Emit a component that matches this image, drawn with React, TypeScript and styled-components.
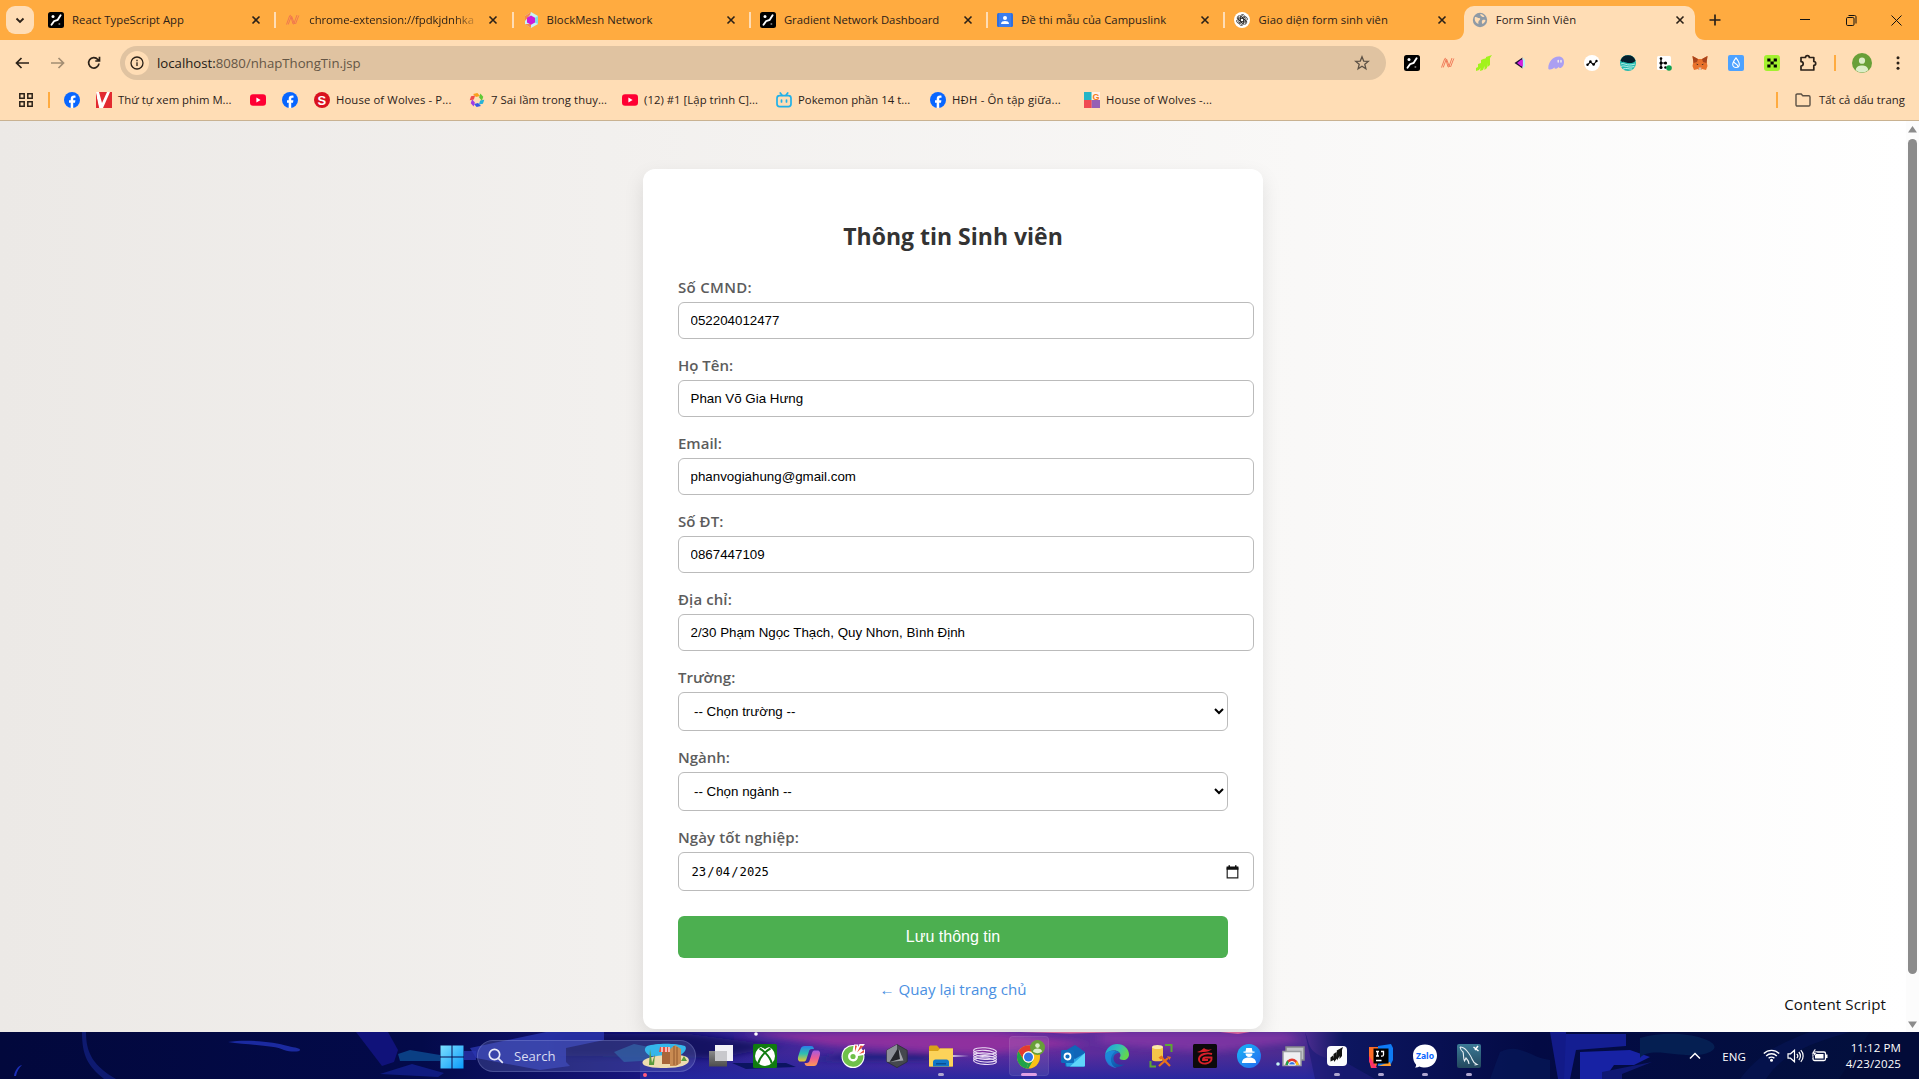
import React from "react";
import styled, { createGlobalStyle, css } from "styled-components";

const ui = `"Open Sans", "Noto Sans", sans-serif`;
const arial = `"Liberation Sans", Arial, sans-serif`;

const Global = createGlobalStyle`
  *, *::before, *::after { box-sizing: border-box; }
  html, body { margin: 0; padding: 0; overflow: hidden; }
  body { font-family: ${ui}; color: #222; }
`;

const Screen = styled.div`
  display: flex;
  flex-direction: column;
  width: 1919px;
  height: 1079px;
  overflow: hidden;
  background: #fff;
`;

/* ---------- tab strip ---------- */
const TabStrip = styled.header`
  display: flex;
  align-items: stretch;
  height: 40px;
  background: #ffab40;
`;
const TabSearchWrap = styled.div`
  width: 38px;
  padding: 6px 0 0 6px;
`;
const TabSearch = styled.div`
  display: flex;
  align-items: center;
  justify-content: center;
  width: 28px;
  height: 28px;
  border-radius: 9px;
  background: #ffddb5;
`;
const TabBox = styled.div<{ $active?: boolean; $line?: boolean }>`
  position: relative;
  display: flex;
  align-items: center;
  width: 237.3px;
  height: 40px;
  padding: 0 0 0 10px;
  ${(p) =>
    p.$line &&
    css`
      &::after {
        content: "";
        position: absolute;
        right: -1px;
        top: 12px;
        width: 2px;
        height: 16px;
        background: #ffddb5;
      }
    `}
  ${(p) =>
    p.$active &&
    css`
      &::before {
        content: "";
        position: absolute;
        inset: 6px 4px 0 2.5px;
        border-radius: 10px 10px 0 0;
        background: #ffddb5;
      }
    `}
`;
const Foot = styled.svg<{ $right?: boolean }>`
  position: absolute;
  bottom: 0;
  ${(p) => (p.$right ? "right: -6px;" : "left: -7.5px;")}
`;
const TabIcon = styled.span`
  position: relative;
  display: flex;
  width: 16px;
  height: 16px;
  margin: 0 8px 0 0;
`;
const TabTitle = styled.span<{ $ls: number; $fade?: boolean }>`
  position: relative;
  width: 168px;
  overflow: hidden;
  white-space: nowrap;
  font-size: 11.3px;
  line-height: 18px;
  color: #2b2118;
  letter-spacing: ${(p) => p.$ls}px;
  ${(p) =>
    p.$fade &&
    css`
      mask-image: linear-gradient(to right, #000 145px, rgba(0, 0, 0, 0.15) 168px);
    `}
`;
const Close = styled.svg`
  position: relative;
  margin: -1px 0 0 11px;
`;
const NewTab = styled.div`
  display: flex;
  align-items: center;
  justify-content: center;
  width: 32px;
`;
const WinControls = styled.div`
  display: flex;
  margin: 0 1px 0 auto;
`;
const WinButton = styled.div`
  display: flex;
  align-items: center;
  justify-content: center;
  width: 46px;
  height: 40px;
  &:last-child { width: 44px; }
`;

/* ---------- toolbar ---------- */
const Toolbar = styled.div`
  display: flex;
  align-items: center;
  height: 46px;
  padding-left: 4px;
  background: #ffddb5;
`;
const NavButton = styled.div`
  display: flex;
  align-items: center;
  justify-content: center;
  width: 36px;
  height: 34px;
`;
const Omnibox = styled.div`
  display: flex;
  align-items: center;
  width: 1266px;
  height: 34px;
  margin-left: 8px;
  padding: 0 16px 0 5px;
  border-radius: 17px;
  background: #e0c3a1;
`;
const SiteInfo = styled.span`
  display: flex;
  align-items: center;
  justify-content: center;
  width: 24px;
  height: 24px;
  border-radius: 50%;
  background: #ffddb5;
`;
const Url = styled.span`
  margin: 0 auto 0 8px;
  font-size: 13.2px;
  color: #655645;
  white-space: nowrap;
  b { font-weight: 400; color: #1f1a14; }
`;
const Extensions = styled.div`
  display: flex;
  margin-left: 8px;
`;
const ExtButton = styled.div`
  display: flex;
  align-items: center;
  justify-content: center;
  width: 36px;
  height: 34px;
`;
const Divider = styled.i<{ $m: string }>`
  width: 2px;
  height: 16px;
  margin: ${(p) => p.$m};
  background: #ffab40;
`;

/* ---------- bookmarks ---------- */
const Bookmarks = styled.div`
  display: flex;
  align-items: center;
  height: 35px;
  padding: 0 14px 6px 19px;
  border-bottom: 1px solid #c9b291;
  background: #ffddb5;
`;
const Bookmark = styled.div<{ $w: number; $ls?: number }>`
  display: flex;
  align-items: center;
  width: ${(p) => p.$w}px;
  gap: 6px;
  font-size: 11.3px;
  line-height: 16px;
  color: #2b2118;
  white-space: nowrap;
  letter-spacing: ${(p) => p.$ls ?? 0}px;
  svg { flex: none; }
`;
const AllBookmarks = styled(Bookmark)`
  gap: 8px;
`;

/* ---------- page ---------- */
const Page = styled.main`
  display: flex;
  height: 911px;
  overflow: hidden;
  background: #fff;
`;
const PageBody = styled.div`
  position: relative;
  display: flex;
  justify-content: center;
  width: 1906px;
  padding-top: 48px;
  background: linear-gradient(to right, #ece9e6, #ffffff);
`;
const Card = styled.section`
  width: 620px;
  height: 860px;
  padding: 51px 35px 0;
  border-radius: 12px;
  background: #fff;
  box-shadow: 0 8px 20px rgba(0, 0, 0, 0.1);
`;
const Heading = styled.h2`
  margin: 0 0 24px;
  font-size: 23px;
  line-height: 32px;
  font-weight: 700;
  text-align: center;
  color: #333;
`;
const Field = styled.div`
  display: flex;
  flex-direction: column;
  gap: 4px;
  margin-bottom: 15px;
`;
const FieldLabel = styled.label<{ $ls?: number }>`
  align-self: flex-start;
  font-size: 15px;
  line-height: 22px;
  font-weight: 600;
  color: #5c5c5c;
  letter-spacing: ${(p) => p.$ls ?? 0}px;
`;
const box = css`
  border: 1px solid #bbb;
  border-radius: 6px;
  background: #fff;
  color: #000;
  font: 13.333px ${arial};
`;
const TextInput = styled.input`
  ${box}
  width: 576px;
  height: 37px;
  padding: 0 11px 0 11.5px;
  outline: none;
`;
const SelectBox = styled.select`
  ${box}
  width: 550px;
  height: 39px;
  padding: 0 11px;
  outline: none;
`;
const DateBox = styled.div`
  ${box}
  display: flex;
  align-items: center;
  justify-content: space-between;
  width: 576px;
  height: 39px;
  padding: 0 14px 0 12.5px;
  font: 12.2px "DejaVu Sans Mono", monospace;
  i { font-style: normal; margin: 0 1px; }
`;
const Submit = styled.button`
  display: block;
  width: 550px;
  height: 42px;
  margin-top: 25px;
  border: 0;
  border-radius: 6px;
  background: #4caf50;
  color: #fff;
  font: 16px ${arial};
`;
const BackLink = styled.a`
  display: block;
  margin-top: 20px;
  font-size: 15.1px;
  line-height: 22px;
  text-align: center;
  color: #4a90e2;
  text-decoration: none;
`;
const ContentScript = styled.div`
  position: absolute;
  right: 20px;
  bottom: 17px;
  font-size: 15.1px;
  line-height: 22px;
  color: #111;
  letter-spacing: 0.1px;
`;
const Scrollbar = styled.div`
  display: flex;
  flex-direction: column;
  align-items: center;
  justify-content: space-between;
  width: 13px;
  padding: 5px 0 4px;
  background: #fcfcfc;
`;
const Thumb = styled.div`
  width: 9px;
  height: 835px;
  margin-bottom: 42px;
  border-radius: 5px;
  background: #8b8b8b;
`;

/* ---------- taskbar ---------- */
const Taskbar = styled.footer`
  position: relative;
  display: flex;
  align-items: stretch;
  height: 47px;
  padding: 0 18px 0 440px;
  background: #02083c;
`;
const Wallpaper = styled.svg`
  position: absolute;
  inset: 0;
`;
const Start = styled.div`
  position: relative;
  display: flex;
  align-items: center;
  padding-top: 2px;
`;
const SearchPill = styled.div`
  position: relative;
  display: flex;
  align-items: center;
  width: 219px;
  height: 32px;
  margin: 8px 3px 0 13px;
  padding: 0 5px 0 10px;
  border-radius: 16px;
  border: 1px solid rgba(190, 200, 255, 0.22);
  background: rgba(120, 130, 200, 0.26);
  font-size: 13.1px;
  line-height: 18px;
  color: #d9dcf2;
  span { margin: -1px auto 0 10px; }
`;
const AppCell = styled.div<{ $active?: boolean; $dot?: boolean }>`
  position: relative;
  display: flex;
  align-items: center;
  justify-content: center;
  width: 40px;
  height: 40px;
  margin: 4px 2px;
  border-radius: 4px;
  ${(p) => p.$active && "background: rgba(255,255,255,.09); box-shadow: inset 0 0 0 1px rgba(255,255,255,.07);"}
  &::after {
    content: "";
    position: absolute;
    bottom: 0;
    height: 3px;
    border-radius: 2px;
    width: ${(p) => (p.$active ? 16 : p.$dot ? 6 : 0)}px;
    background: ${(p) => (p.$active ? "#dfa0e4" : "#aea6cf")};
  }
`;
const Tray = styled.div`
  position: relative;
  display: flex;
  align-items: center;
  margin-left: auto;
  color: #fff;
`;
const Lang = styled.span`
  margin: 1px 17px 0 21px;
  font-size: 11.5px;
  letter-spacing: 0.1px;
`;
const TrayIcons = styled.div`
  display: flex;
  align-items: center;
  gap: 7px;
  margin-right: 16px;
`;
const Clock = styled.div`
  width: 57px;
  text-align: right;
  font-size: 11.5px;
  line-height: 16px;
  white-space: nowrap;
  letter-spacing: 0.1px;
`;

/* ---------- browser icons ---------- */
const Gradient = () => (
  <svg width="16" height="16" viewBox="0 0 16 16">
    <rect width="16" height="16" rx="2.5" fill="#000" />
    <path d="M12.6 3.2 9.6 8 6 9.2 3.5 12.8" stroke="#fff" strokeWidth="1.9" fill="none" strokeLinecap="round" />
    <circle cx="5" cy="4.4" r="1.5" fill="#fff" />
    <circle cx="11.4" cy="12" r="1" fill="#777" />
  </svg>
);
const Nodes = () => (
  <svg width="16" height="16" viewBox="0 0 16 16" fill="none" stroke="#ee7250" strokeWidth=".9">
    <path d="M1.5 12.5 4.6 4c.4-1 1-.9 1.2 0l2 7.400c.3 1 .9 1 1.200 0L12 3M3.200 12.500 6 5M10.500 12 13.800 3.500M6.500 4l3 8" />
  </svg>
);
const Block = () => (
  <svg width="16" height="16" viewBox="0 0 16 16">
    <path d="M8 0 15 4v8l-7 4-6-4V4z" fill="#c9f2f4" />
    <path d="M8 0 2 4v5l5-6zM2 12l6 4v-4z" fill="#f58a4b" />
    <path d="M8 3.500 12 5.800v4.600L8 12.800 4 10.400V5.800z" fill="#cc1bd8" />
    <path d="m12 5.800 3-1.800v8l-3-1.600z" fill="#7fdfe8" />
  </svg>
);
const Contact = () => (
  <svg width="16" height="16" viewBox="0 0 16 16">
    <rect y="1" width="16" height="14" rx="1.500" fill="#2f6fdf" />
    <path d="M2 1h12v14H2z" fill="#3b7ded" />
    <circle cx="8" cy="6" r="2" fill="#fff" />
    <path d="M4 12c0-2.400 2-3 4-3s4 .6 4 3z" fill="#fff" />
  </svg>
);
const OpenAi = () => (
  <svg width="16" height="16" viewBox="0 0 16 16" fill="none" stroke="#222" strokeWidth=".8">
    <circle cx="8" cy="8" r="8" fill="#fff" stroke="none" />
    {[0, 60, 120, 180, 240, 300].map((a) => (
      <path key={a} transform={`rotate(${a} 8 8)`} d="M6.200 9V5a2.400 2.400 0 0 1 4.400-1.300M6.200 6.900 9.500 5l2.600 1.500" />
    ))}
  </svg>
);
const Globe = () => (
  <svg width="16" height="16" viewBox="0 0 16 16">
    <circle cx="8" cy="8" r="7.200" fill="#8f9aa5" />
    <path d="M3 5c2-.5 2.500 1 4 1s1.500 1.500.5 2.200S6 10 6.500 12c-2.500-.8-4.500-3.500-3.500-7zM8.500 2c1.500.3 3 1 4 2.500-1 .8-2.500.8-3-.2S7.700 3 8.500 2zM10.500 8c1.500-.5 3-.2 3 .5s-1.500 3-3 3.500c-.8-1.200-1-3 0-4z" fill="#ffddb5" />
  </svg>
);
const CloseX = () => (
  <Close width="10" height="10" viewBox="0 0 10 10" stroke="#2b2118" strokeWidth="1.600">
    <path d="m1.500 1.500 7 7m0-7-7 7" />
  </Close>
);
const Facebook = () => (
  <svg width="16" height="16" viewBox="0 0 16 16">
    <circle cx="8" cy="8" r="8" fill="#0866ff" />
    <path d="M6.700 16v-5.300H5V8.300h1.700V7.100c0-2.500 1.200-3.600 3.500-3.600.5 0 1 .1 1.300.2v2.100h-.9c-1 0-1.400.4-1.400 1.400v1.100h2.200l-.4 2.400H9.200V16z" fill="#fff" />
  </svg>
);
const YouTube = () => (
  <svg width="16" height="16" viewBox="0 0 16 16">
    <rect y="2.300" width="16" height="11.400" rx="3" fill="#ff0033" />
    <path d="m6.400 5.600 4.200 2.400-4.200 2.400z" fill="#fff" />
  </svg>
);
const VLogo = () => (
  <svg width="16" height="16" viewBox="0 0 16 16">
    <path d="M0 0h16v16H0z" fill="#e22a30" />
    <path d="M0 0h3l3 11L11 0h3L7 16H2.500z" fill="#fff" />
    <path d="M0 2v14h3.200z" fill="#e22a30" />
  </svg>
);
const SLogo = () => (
  <svg width="16" height="16" viewBox="0 0 16 16">
    <circle cx="8" cy="8" r="8" fill="#d9121f" />
    <text x="8" y="12.600" textAnchor="middle" fontFamily="Liberation Sans" fontWeight="700" fontSize="13" fill="#fff">S</text>
  </svg>
);
const Flower = () => (
  <svg width="16" height="16" viewBox="0 0 16 16">
    {["#f9a01b", "#5fc935", "#25b3d8", "#3458e8", "#a03be6", "#f04a4a"].map((c, i) => (
      <path key={c} d="M5.400 1.200h4.400l2 3.600H7.600z" fill={c} transform={`rotate(${i * 60 - 12} 8 8)`} />
    ))}
  </svg>
);
const Bili = () => (
  <svg width="16" height="16" viewBox="0 0 16 16" fill="none" stroke="#20b0e8" strokeWidth="1.700" strokeLinecap="round">
    <rect x="1" y="3.700" width="14" height="11" rx="2.600" />
    <path d="M4.300 1 6 3.300M11.700 1 10 3.300M5.500 8v2M10.500 8v2" />
  </svg>
);
const GGrid = () => (
  <svg width="16" height="16" viewBox="0 0 16 16">
    <path d="M0 0h7.700v8H0z" fill="#25b5c7" />
    <path d="M7.700 0H16v8H7.700z" fill="#fff1e8" />
    <path d="M0 8h7.700v8H0z" fill="#f04a52" />
    <path d="M7.700 8H16v8H7.700z" fill="#9560b5" />
    <text x="12" y="7.500" textAnchor="middle" fontFamily="Liberation Sans" fontWeight="700" fontSize="9" fill="#f47b20">G</text>
  </svg>
);
const extArt: Record<string, React.ReactNode> = {
  bars: <path d="M0 16v-3l2-1V9l3-1V5l3.500-1.500V4L10 3V2l6-2-2 3v7l-2.500 2V8L11 13l-2.500 2V11L7 15l-3 1 .5-3L3 15z" fill="#a2f21c" />,
  block: (
    <>
      <path d="m2.500 8 8-5.500v11z" fill="#1b1030" />
      <path d="m10.500 2.500 2.500 2v7l-2.500 2z" fill="#b9eef2" />
      <path d="M5 8 9 4.800h1.800v6.400H9z" fill="#d51ee0" />
    </>
  ),
  phantom: (
    <>
      <path d="M.3 13C.3 7 5 1.500 10.500 1.500c4 0 5.500 2.500 5.500 5.500 0 3.500-2 6-4 6-1.200 0-1.300-.8-1.300-1.200-1 1.400-2.200 2-3.200 2-1 0-1.200-.8-1-1.500-1.200 1.500-3.200 2.200-4.500 2.200-1.200 0-1.700-.5-1.700-1.500z" fill="#ab9ff2" />
      <path d="M10.200 5.500v1.500M13 5.500v1.500" stroke="#fff5e6" strokeWidth="1.300" strokeLinecap="round" />
    </>
  ),
  nodepay: (
    <>
      <circle cx="8" cy="8" r="8" fill="#fff" />
      <path d="M3.500 9.800 6.300 7l3.300 2.500L12.500 6" stroke="#000" strokeWidth="1.100" fill="none" />
      <g fill="#000"><circle cx="3.500" cy="9.800" r="1.200" /><circle cx="6.400" cy="6.600" r="1.300" /><circle cx="9.600" cy="9.500" r="1.300" /><circle cx="12.500" cy="6" r="1.200" /></g>
    </>
  ),
  wave: (
    <>
      <circle cx="8" cy="8" r="8" fill="#25b9ae" />
      <path d="M1 9c3-2 5 3 14 0M.8 11.500c4-2 7 2 13.500 0M3 14c4-1.500 6 .5 9 0" stroke="#c5f6ee" strokeWidth=".9" fill="none" />
      <path d="M.5 5.500a8 8 0 0 1 15 0C14 8.500 9 8.500 6 7.500s-4 0-5.500-2z" fill="#041e2b" />
    </>
  ),
  dots: (
    <>
      <rect x="1" y="1" width="14" height="14" rx="1.500" fill="#fff" />
      <g fill="#000"><circle cx="5" cy="3.500" r="1.300" /><circle cx="5" cy="8" r="1.600" /><circle cx="5" cy="12.500" r="1.600" /><circle cx="9.500" cy="8" r="1.600" /><circle cx="9.500" cy="12.500" r="1.300" /><path d="M4.400 3h1.200v9H4.400zM5 7.500h4v1H5z" /></g>
      <circle cx="13" cy="13" r="2.800" fill="#12a150" />
    </>
  ),
  fox: (
    <>
      <path d="m.5 1 5.500 3h4l5.500-3-.8 6 .8 4-1.500 4-4-1-1 1H7l-1-1-4 1L.5 11l.8-4z" fill="#e8712a" />
      <path d="m.5 1 5.500 3-1 3-3.500 1zM15.500 1 10 4l1 3 3.500 1z" fill="#a8441c" />
      <path d="M4.500 8.500 6.500 10H5zM11.500 8.500 9.500 10H11z" fill="#222" />
      <path d="M6.500 12.500h3L9 15H7z" fill="#d9c3b0" />
    </>
  ),
  drop: (
    <>
      <rect width="16" height="16" rx="2" fill="#4da2ff" />
      <path d="M8 2.800c2 2.600 3.300 4.400 3.300 6.400a3.300 3.300 0 0 1-6.600 0C4.700 7.200 6 5.400 8 2.800zM6 7c.5 2 4 1.600 3.800 4.600" fill="none" stroke="#fff" strokeWidth="1.100" />
    </>
  ),
  okx: (
    <>
      <rect width="16" height="16" rx="3" fill="#a3f02f" />
      <path d="M3.300 3.500h3.200v3H3.300zM9.700 3.500h3.200v3H9.700zM6.500 6.500h3.200v3H6.500zM3.300 9.500h3.200v3H3.300zM9.700 9.500h3.200v3H9.700z" fill="#000" />
    </>
  ),
};

/* ---------- taskbar icons ---------- */
const appArt: Record<string, React.ReactNode> = {
  taskview: (
    <>
      <defs><linearGradient id="tv" x1="0" y1="0" x2="0" y2="1"><stop offset="0" stopColor="#8a8a8a" /><stop offset="1" stopColor="#4d4d4d" /></linearGradient></defs>
      <path d="M6 1h18v16H6z" fill="#f1f1f5" />
      <path d="M0 7h18v15.500H0z" fill="url(#tv)" />
      <path d="M6 7h12v10H6z" fill="#c8c8cc" />
    </>
  ),
  xbox: (
    <>
      <rect width="24" height="24" rx="1.500" fill="#107c10" />
      <circle cx="12" cy="12" r="10" fill="#fff" />
      <path d="M5.500 2.500C8 2.800 10.300 4 12 5.300c1.700-1.300 4-2.500 6.500-2.800L16 0H8z" fill="#107c10" />
      <path d="M6.500 4.500C8.500 5.500 10.500 7 12 8.600c-3.500 3.400-6 7.200-6.800 10.900M17.500 4.500C15.500 5.500 13.500 7 12 8.600c3.500 3.400 6 7.200 6.800 10.900" fill="none" stroke="#107c10" strokeWidth="2" />
    </>
  ),
  copilot: (
    <>
      <defs>
        <linearGradient id="c1" x1="0" y1="0" x2="0" y2="1"><stop offset="0" stopColor="#2a7fe8" /><stop offset=".5" stopColor="#2fc0b0" /><stop offset="1" stopColor="#f0c52c" /></linearGradient>
        <linearGradient id="c2" x1="0" y1="0" x2="0" y2="1"><stop offset="0" stopColor="#a45be0" /><stop offset=".5" stopColor="#ee5c94" /><stop offset="1" stopColor="#fb9a55" /></linearGradient>
      </defs>
      <path d="M7.500 2H14c2 0 2.500 1 3 3h-2c-2 0-2.700 1-3.200 2.800L9.500 15c-.6 2-1.500 2.500-3 2.500H3.500C1 17.500.5 15 1.200 12.500l2.300-7.300C4.300 3 5.500 2 7.500 2z" fill="url(#c1)" />
      <path d="M17 22h-6.500c-2 0-2.500-1-3-3h2c2 0 2.700-1 3.200-2.800L15 9c.6-2 1.500-2.500 3-2.500h2.500c2.500 0 3 2.500 2.300 5l-2.300 7.300C19.700 21 19 22 17 22z" fill="url(#c2)" />
    </>
  ),
  coccoc: (
    <>
      <circle cx="12" cy="12.500" r="11.500" fill="#fff" />
      <path d="M12.500 2A10.400 10.400 0 1 0 22.300 11l-5.300 1A5 5 0 1 1 11.500 7.500z" fill="#6fc04a" />
      <circle cx="12" cy="12.500" r="2.600" fill="#6fc04a" />
      <path d="M13 .5h4.500l-2.500 7-1.500 1zM18.500 0H24l-8 9-1-.5zM24 5v5l-7 1z" fill="#fff" />
      <path d="m14 1.500 2 .3-2 6zM19.500 1.500l3 .5-6.500 6.500zM23 6v2.500l-5 1.500z" fill="#e8503a" />
    </>
  ),
  cursor: (
    <>
      <path d="m12 .5 10.200 5.800v11.500L12 23.600 1.800 17.800V6.300z" fill="#45484e" stroke="#2b2d32" strokeWidth=".8" />
      <path d="M12 .5v5L5 18l-3.200-.2V6.300z" fill="#8d9198" />
      <path d="m13.500 4 1.500 12-10.500 2z" fill="#24262b" />
      <path d="m13.500 4 5 12.500-14 1.500L15 15z" fill="#b9bcc2" opacity=".8" />
    </>
  ),
  explorer: (
    <>
      <path d="M0 3.500C0 2 .8 1.500 2 1.500h6l2.500 3H24V21c0 1-.5 1.500-1.500 1.500h-21C.5 22.500 0 22 0 21z" fill="#d9a018" />
      <path d="M0 7h9l2-2.500h13V22.500H0z" fill="#fcd35a" />
      <path d="M4 22.500V18c0-1.500 1-2.500 2.500-2.500h11c1.500 0 2.500 1 2.500 2.500v4.500z" fill="#1276c8" />
      <path d="M7 19h10v1.500H7z" fill="#0a4f92" />
    </>
  ),
  stacks: (
    <g fill="none" stroke="#eadcf5" strokeWidth="1.100">
      {[7, 9.6, 12.2, 14.8, 17.200].map((y) => (
        <ellipse key={y} cx="12" cy={y} rx="11.400" ry="3.200" transform={`rotate(4 12 ${y})`} />
      ))}
    </g>
  ),
  chrome: (
    <>
      <circle cx="11.500" cy="13" r="11.500" fill="#fbc116" />
      <path d="M11.500 1.500A11.500 11.500 0 0 1 21.500 7.300H11.500a5.700 5.700 0 0 0-5 8.600L1.500 7.300a11.500 11.500 0 0 1 10-5.800z" fill="#e33b2e" />
      <path d="M1.500 7.300 6.500 15.900a5.700 5.700 0 0 0 5 2.800l-2 5.700A11.500 11.500 0 0 1 1.500 7.300z" fill="#1fa24a" />
      <path d="M11.500 18.700a5.700 5.700 0 0 0 4.900-2.900l-4.900 8.700-2 0z" fill="#1fa24a" />
      <circle cx="11.500" cy="13" r="5.700" fill="#fff" /><circle cx="11.500" cy="13" r="4.500" fill="#2f74e6" />
      <circle cx="20.500" cy="3.500" r="7.500" fill="#689f38" />
      <circle cx="20.500" cy="1.600" r="2.300" fill="#dcedc8" /><path d="M16 7.500c0-2 2-3 4.500-3s4.500 1 4.500 3a7 7 0 0 1-9 0z" fill="#dcedc8" />
    </>
  ),
  outlook: (
    <>
      <path d="m4 7 10-6 10 7v13c0 1-.5 1.500-1.500 1.500h-17C4.500 22.500 4 22 4 21z" fill="#1066b8" />
      <path d="m4 10 10 5 10-6v12c0 1-.5 1.500-1.500 1.500h-17z" fill="#2aa5e6" />
      <path d="m24 9-15 13.500h13.500c1 0 1.500-.5 1.500-1.500z" fill="#5fd6fa" />
      <rect x="0" y="6" width="13" height="13" rx="1.500" fill="#0f6cbd" />
      <circle cx="6.500" cy="12.500" r="3" fill="none" stroke="#fff" strokeWidth="1.800" />
    </>
  ),
  edge: (
    <>
      <defs>
        <linearGradient id="e1" x1="0" y1="0" x2="1" y2=".4"><stop offset="0" stopColor="#1b9de2" /><stop offset=".6" stopColor="#35c1b4" /><stop offset="1" stopColor="#62d84f" /></linearGradient>
        <linearGradient id="e2" x1="0" y1="0" x2="1" y2="1"><stop offset="0" stopColor="#1b86d6" /><stop offset="1" stopColor="#0c4aa0" /></linearGradient>
      </defs>
      <path d="M.2 10.500C1 4.500 6 0 12 0c7 0 12 5 12 10.500 0 3.500-2.600 5.500-5.500 5.500-2.500 0-4-1-4-2 0-.8 1-1 1-2.800 0-2.500-2.500-4.700-6-4.700-4 0-7.500 2-9.300 4z" fill="url(#e1)" />
      <path d="M.2 10.500C2 8 5 6.500 8.500 6.500c3 0 5.200 1.200 6.200 2.700-3-1-6.200 1.500-6.200 5.300 0 4.500 5 8 11.500 5.500A12 12 0 0 1 .2 10.500z" fill="url(#e2)" />
      <path d="M0 12c0 7 5.500 12 12 12-4.500-1.500-6.500-5.500-6-9.500.3-3 2-5.500 4.500-7.300C5 6 0 8.500 0 12z" fill="#1f8fdf" opacity=".7" />
    </>
  ),
  sql: (
    <>
      <path d="M16 1h6.500v7M1.500 17v5.500H7" stroke="#5da832" strokeWidth="2" fill="none" />
      <path d="M3 3v13c0 1.800 11 1.800 11 0V3z" fill="#f4c54a" /><ellipse cx="8.500" cy="3" rx="5.500" ry="2" fill="#fbe7a6" />
      <path d="m10 22 9-8m-7-1 9 9" stroke="#e8721c" strokeWidth="2.200" /><path d="m9.500 13.500 3-2 2 2-3 2zM18 12l4 1-1.500 3z" fill="#e8721c" />
    </>
  ),
  garena: (
    <>
      <rect width="24" height="24" rx="1.500" fill="#0c0a0c" />
      <path d="M4 8c3-1 5-2 7-4 2 2 5 2 8 1-2 2-5 3-8 3S6 9 4 8z" fill="#d8202a" />
      <path d="M19 10c-5-1.500-12 0-13 4.500C5.500 18 9 20 13 19.500c4-.5 6-3 5.500-6h-6c-1.500 0-2.500 1-2.500 2.500h5" fill="none" stroke="#d8202a" strokeWidth="1.900" />
    </>
  ),
  spy: (
    <>
      <defs><linearGradient id="sp" x1="0" y1="0" x2="1" y2="1"><stop offset="0" stopColor="#19b8f5" /><stop offset="1" stopColor="#2467f0" /></linearGradient></defs>
      <circle cx="12" cy="12" r="12" fill="url(#sp)" />
      <path d="M8.500 7.500 9.200 4h5.600l.7 3.500zM6.500 7.500h11v1.200h-11zM8.500 9.500h7c0 2-1.500 3.500-3.500 3.500s-3.500-1.500-3.500-3.500zM5 19c0-4 3-5.500 7-5.500s7 1.500 7 5.500z" fill="#fff" />
    </>
  ),
  remote: (
    <>
      <path d="M5 3h18v13H5z" fill="#bfc2c6" stroke="#85888c" strokeWidth="1.500" />
      <path d="M2 7.500h18v14H2z" fill="#eef0f2" stroke="#9a9da1" strokeWidth="1.500" />
      <path d="M4.500 21a6.500 6.500 0 0 1 13 0z" fill="#e33b2e" /><path d="M4.500 21a6.500 6.500 0 0 1 2-4.700L9 21z" fill="#1fa24a" /><path d="M17.500 21a6.500 6.500 0 0 0-1.500-4L13 21z" fill="#fbc116" />
      <path d="M7.500 21a3.500 3.500 0 0 1 7 0z" fill="#2f74e6" stroke="#fff" />
      <circle cx="-3" cy="20" r="1.800" fill="#c7f5f2" />
    </>
  ),
  shard: (
    <>
      <rect x="2" y="2" width="20" height="20" rx="4" fill="#fbfbfd" />
      <path d="M5.500 17.500v-4l2.500-2 .5 3V10l3-2 .3 5V6.500L18 3l-1 3v6l-2.500 3v-3L12 16.500v-2L9 18v-2z" fill="#111" />
    </>
  ),
  idea: (
    <>
      <path d="M0 3h13l-6 20-5 1-2-8z" fill="#fc6d26" /><path d="M0 12 8 24H3L0 17z" fill="#fe2f6d" />
      <path d="M9 2 22 0l2 4v12l-3 6H9z" fill="#0f7bf5" /><path d="m9 22 12-4 1 4h-8z" fill="#fb9d2f" />
      <rect x="4.500" y="4.500" width="15" height="15" fill="#000" />
      <path d="M7 7.500h3M8.500 7.500v4.500M7 12h3M12 7.500h2.500v3.200c0 1-.6 1.500-1.500 1.500h-1M7 16.500h5.500" stroke="#fff" strokeWidth="1.300" fill="none" />
    </>
  ),
  zalo: (
    <>
      <path d="M12 .5c7 0 12 4.500 12 11s-5 12-12 12c-2.500 0-4-.4-5.500-1-1.500.9-3 1.200-4.500 1 1-1 1.300-2 1-3-2-2-3-5-3-9 0-6.500 5-11 12-11z" fill="#fff" />
      <text x="12" y="14.800" textAnchor="middle" fontFamily="Noto Sans" fontWeight="700" fontSize="8.600" fill="#0b68ff">Zalo</text>
    </>
  ),
  mysql: (
    <>
      <defs><linearGradient id="my" x1="0" y1="0" x2="0" y2="1"><stop offset="0" stopColor="#3b7a96" /><stop offset="1" stopColor="#23485e" /></linearGradient></defs>
      <rect width="24" height="24" rx="2" fill="url(#my)" />
      <path d="M3 3c3 0 5 1.500 7 4s4 5 5 8 3 4.500 5 5.500l-2.500.5M3 3c.5 2.500 1.500 4 3 5 1 3 0 6 1.500 9l1.500-3c2 2 3 5 3 6" fill="none" stroke="#e7eff3" strokeWidth="1.100" />
      <path d="m16.500 3 5 4M21 2l-3 4" stroke="#fff" strokeWidth="1.500" />
    </>
  ),
};
const apps: [string, ("active" | "dot")?][] = [
  ["taskview"], ["xbox"], ["copilot"], ["coccoc"], ["cursor"], ["explorer", "dot"], ["stacks"], ["chrome", "active"],
  ["outlook"], ["edge"], ["sql"], ["garena"], ["spy"], ["remote"], ["shard", "dot"], ["idea", "dot"], ["zalo", "dot"], ["mysql", "dot"],
];

const TaskbarArt = () => (
  <Wallpaper width="1919" height="47" viewBox="0 0 1919 47">
    <defs>
      <linearGradient id="sky" x1="0" x2="1919" y1="0" y2="0" gradientUnits="userSpaceOnUse">
        <stop offset="0" stopColor="#02083c" /><stop offset=".22" stopColor="#030a4a" /><stop offset=".33" stopColor="#17157c" />
        <stop offset=".4" stopColor="#3a2698" /><stop offset=".48" stopColor="#5a2a9e" /><stop offset=".56" stopColor="#5e2c9c" />
        <stop offset=".68" stopColor="#4a2c90" /><stop offset=".7" stopColor="#0d1660" /><stop offset=".8" stopColor="#030a44" /><stop offset="1" stopColor="#02103c" />
      </linearGradient>
      <linearGradient id="low" x1="0" x2="0" y1="0" y2="1"><stop offset=".45" stopColor="#2327a0" stopOpacity="0" /><stop offset="1" stopColor="#2327a0" stopOpacity=".9" /></linearGradient>
      <filter id="soft" x="-20%" y="-80%" width="140%" height="260%"><feGaussianBlur stdDeviation="7 3" /></filter>
    </defs>
    <path d="M0 0h1919v47H0z" fill="url(#sky)" />
    <path d="M640 0h680v47H640z" fill="url(#low)" />
    <g filter="url(#soft)">
      <path d="M740 0h260l90 12-110 10-150-8z" fill="#a0309f" opacity=".75" />
      <path d="M1100 0h190l10 10-90 10-110-8z" fill="#8b38a8" opacity=".7" />
      <path d="M560 2h130l90 12-60 12-160-2z" fill="#0b1058" opacity=".8" />
      <path d="M850 22h90l-10 6h-120z" fill="#131c78" />
    </g>
    <path d="M82 0h4c0 22 8 34 30 47h-12C88 34 82 24 82 0z" fill="#0e1a70" />
    <path d="M14 44c1-6 4-10 8-11-3 3-5 6-6 11z" fill="#1c2fb8" />
    <path d="M228 10c20-3 46 0 60 4 8 2 12 2 12 4s-10 2-16 0c-10-5-36-5-56-8z" fill="#1b2aa0" />
    <path d="M356 0h32l10 18-4 12-12 4z" fill="#10127a" />
    <path d="m380 42 32-10 32 9-6 4z" fill="#0f1b80" />
    <path d="m398 22 12-4 30 5v6l-40 0z" fill="#0a3f84" />
    <path d="M464 19h12v9h-12z" fill="#222a9a" />
    <path d="m470 16 76-16h58v8l-38 8v14l4 4-30 4-64-12z" fill="#2b36b0" opacity=".8" />
    <path d="m614 20 20-8 30 6-6 10-34 2z" fill="#1b5b9c" opacity=".7" />
    <path d="M732 31h54l10 4-50 2z" fill="#0b1460" />
    <circle cx="756" cy="2" r="1.800" fill="#fff" /><circle cx="645" cy="43" r="2" fill="#ff5c7c" /><path d="m945 23 24 1-24 1z" fill="#fff" />
    <path d="M1220 0h30l-12 2zM1020 0h110l-60 1.500z" fill="#f07098" opacity=".8" />
    <path d="M1305 0c6 14 0 24 40 30l30 17h-60z" fill="#1c1b78" opacity=".7" />
    <path d="M1550 0h16v47h-8z" fill="#121a88" /><path d="M1566 2h60v12l-50 4-6 29h-6z" fill="#141e92" />
    <path d="m1580 20 50-2 20 7-16 8-20 0-10 14h-24z" fill="#1722a4" /><path d="m1602 40 50-10-30 12v5h-20z" fill="#0f1874" />
    <path d="M1640 6c40-12 90 4 70 14s-60-8-70 6z" fill="#051f52" /><path d="M1740 47c20-26 40-36 70-47h40c-50 14-70 26-84 47z" fill="#05124c" />
    <path d="M1870 0h49v47h-80z" fill="#020b38" />
    <path d="M1500 20c20-10 30 6 50 8v19h-60z" fill="#071a5c" opacity=".6" />
  </Wallpaper>
);

const tabs: [string, React.ReactNode, number][] = [
  ["React TypeScript App", <Gradient />, 0.05],
  ["chrome-extension://fpdkjdnhka", <Nodes />, -0.06],
  ["BlockMesh Network", <Block />, 0.05],
  ["Gradient Network Dashboard", <Gradient />, 0],
  ["Đề thi mẫu của Campuslink", <Contact />, 0.04],
  ["Giao diện form sinh viên", <OpenAi />, 0.04],
  ["Form Sinh Viên", <Globe />, 0.08],
];
const marks: [React.ReactNode, string, number, number][] = [
  [<Facebook />, "", 32, 0],
  [<VLogo />, "Thứ tự xem phim M...", 154, 0.04],
  [<YouTube />, "", 32, 0],
  [<Facebook />, "", 32, 0],
  [<SLogo />, "House of Wolves - P...", 155, 0.12],
  [<Flower />, "7 Sai lầm trong thuy...", 153, 0.09],
  [<YouTube />, "(12) #1 [Lập trình C]...", 154, 0.05],
  [<Bili />, "Pokemon phần 14 t...", 154, 0.02],
  [<Facebook />, "HĐH - Ôn tập giữa...", 154, 0.21],
  [<GGrid />, "House of Wolves -...", 154, 0.15],
];
const inputs: [string, string, number][] = [
  ["Số CMND:", "052204012477", 0.3],
  ["Họ Tên:", "Phan Võ Gia Hưng", 0],
  ["Email:", "phanvogiahung@gmail.com", 0],
  ["Số ĐT:", "0867447109", 0.1],
  ["Địa chỉ:", "2/30 Phạm Ngọc Thạch, Quy Nhơn, Bình Định", 0.1],
];
const selects: [string, string][] = [
  ["Trường:", "-- Chọn trường --"],
  ["Ngành:", "-- Chọn ngành --"],
];

export default function App() {
  return (
    <Screen>
      <Global />
      <TabStrip>
        <TabSearchWrap>
          <TabSearch>
            <svg width="10" height="10" viewBox="0 0 10 10" fill="none" stroke="#2b2118" strokeWidth="1.800"><path d="m1.500 3.500 3.500 3.500 3.500-3.500" /></svg>
          </TabSearch>
        </TabSearchWrap>
        {tabs.map(([title, icon, ls], i) => (
          <TabBox key={title} $active={i === 6} $line={i < 5}>
            {i === 6 && (
              <>
                <Foot width="10" height="10" viewBox="0 0 10 10"><path d="M10 0v10H0C6 10 10 6 10 0z" fill="#ffddb5" /></Foot>
                <Foot $right width="10" height="10" viewBox="0 0 10 10"><path d="M0 0v10h10C4 10 0 6 0 0z" fill="#ffddb5" /></Foot>
              </>
            )}
            <TabIcon>{icon}</TabIcon>
            <TabTitle $ls={ls} $fade={i === 1}>{title}</TabTitle>
            <CloseX />
          </TabBox>
        ))}
        <NewTab>
          <svg width="12" height="12" viewBox="0 0 12 12" stroke="#2b2118" strokeWidth="1.700"><path d="M6 .5v11M.5 6h11" /></svg>
        </NewTab>
        <WinControls>
          <WinButton><svg width="10" height="10" viewBox="0 0 10 10" stroke="#111"><path d="M0 4.500h10" /></svg></WinButton>
          <WinButton><svg width="11" height="11" viewBox="0 0 11 11" fill="none" stroke="#111"><rect x=".5" y="2.500" width="7.500" height="8" rx="1.200" /><path d="M2.500.5H8.500c1 0 1.500.5 1.500 1.500v6.500" /></svg></WinButton>
          <WinButton><svg width="11" height="11" viewBox="0 0 11 11" stroke="#111"><path d="m.5.5 10 10m0-10-10 10" /></svg></WinButton>
        </WinControls>
      </TabStrip>

      <Toolbar>
        <NavButton><svg width="14" height="12" viewBox="0 0 14 12" fill="none" stroke="#2b2118" strokeWidth="1.700"><path d="M14 6H1.500M6.500 1l-5 5 5 5" /></svg></NavButton>
        <NavButton><svg width="14" height="12" viewBox="0 0 14 12" fill="none" stroke="#a38d72" strokeWidth="1.700"><path d="M0 6h12.500M7.500 1l5 5-5 5" /></svg></NavButton>
        <NavButton><svg width="14" height="14" viewBox="0 0 14 14" fill="none" stroke="#2b2118" strokeWidth="1.700"><path d="M12 7.500A5.200 5.200 0 1 1 10.800 3.500L12.500 5M12.500.8V5H8.300" /></svg></NavButton>
        <Omnibox>
          <SiteInfo><svg width="14" height="14" viewBox="0 0 14 14" fill="none" stroke="#2b2118" strokeWidth="1.300"><circle cx="7" cy="7" r="6" /><path d="M7 6.200V10M7 3.800v1.400" /></svg></SiteInfo>
          <Url><b>localhost:</b>8080/nhapThongTin.jsp</Url>
          <svg width="16" height="16" viewBox="0 0 16 16" fill="none" stroke="#5c5145" strokeWidth="1.300"><path d="m8 1.800 1.700 4.300 4.600.3-3.500 2.900 1.100 4.500L8 11.300l-3.900 2.500 1.100-4.500-3.500-2.900 4.600-.3z" /></svg>
        </Omnibox>
        <Extensions>
          <ExtButton><Gradient /></ExtButton>
          <ExtButton><Nodes /></ExtButton>
          {Object.keys(extArt).map((n) => (
            <ExtButton key={n}><svg width="16" height="16" viewBox="0 0 16 16">{extArt[n]}</svg></ExtButton>
          ))}
          <ExtButton>
            <svg width="18" height="18" viewBox="0 0 18 18" fill="none" stroke="#2b2118" strokeWidth="1.700" strokeLinejoin="round"><path d="M2 3.500h4.500a1.900 1.900 0 0 1 3.800 0h4.500v4a1.900 1.900 0 0 1 0 3.800v4.700H2v-4a2.200 2.200 0 0 0 0-4.400z" /></svg>
          </ExtButton>
        </Extensions>
        <Divider $m="0 8px" />
        <ExtButton>
          <svg width="20" height="20" viewBox="0 0 20 20"><circle cx="10" cy="10" r="10" fill="#689f38" /><circle cx="10" cy="7.700" r="3.100" fill="#dcedc8" /><path d="M3.800 17.200C3.800 14 7 12.600 10 12.600s6.200 1.400 6.200 4.600a9.900 9.900 0 0 1-12.400 0z" fill="#dcedc8" /></svg>
        </ExtButton>
        <ExtButton><svg width="4" height="16" viewBox="0 0 4 16" fill="#2b2118"><circle cx="2" cy="2.800" r="1.500" /><circle cx="2" cy="8" r="1.500" /><circle cx="2" cy="13.200" r="1.500" /></svg></ExtButton>
      </Toolbar>

      <Bookmarks>
        <svg width="14" height="14" viewBox="0 0 14 14" fill="none" stroke="#2b2118" strokeWidth="1.500"><path d="M.8.8h4.400v4.400H.8zM8.800.8h4.400v4.400H8.800zM.8 8.800h4.400v4.400H.8zM8.800 8.800h4.400v4.400H8.800z" /></svg>
        <Divider $m="0 14px 0 15px" />
        {marks.map(([icon, text, w, ls], i) => <Bookmark key={i} $w={w} $ls={ls}>{icon}{text}</Bookmark>)}
        <Divider $m="0 17px 0 auto" />
        <AllBookmarks $w={110} $ls={0.05}>
          <svg width="16" height="14" viewBox="0 0 16 14" fill="none" stroke="#5c5145" strokeWidth="1.400"><path d="M1 2.200C1 1.500 1.500 1 2.200 1h4l1.600 1.800h6c.7 0 1.200.5 1.200 1.200v7.800c0 .7-.5 1.200-1.200 1.200H2.200C1.500 13 1 12.500 1 11.800z" /></svg>
          Tất cả dấu trang
        </AllBookmarks>
      </Bookmarks>

      <Page>
        <PageBody>
          <Card>
            <Heading>Thông tin Sinh viên</Heading>
            {inputs.map(([label, value, ls]) => (
              <Field key={label}><FieldLabel $ls={ls}>{label}</FieldLabel><TextInput defaultValue={value} /></Field>
            ))}
            {selects.map(([label, value]) => (
              <Field key={label}><FieldLabel>{label}</FieldLabel><SelectBox><option>{value}</option></SelectBox></Field>
            ))}
            <Field>
              <FieldLabel $ls={0.1}>Ngày tốt nghiệp:</FieldLabel>
              <DateBox>
                <span>23<i>/</i>04<i>/</i>2025</span>
                <svg width="13" height="14" viewBox="0 0 13 14"><path d="M1.200 3h10.600v9.800H1.200z" fill="none" stroke="#222" strokeWidth="1.200" /><path d="M.6 1.500h11.800v3.300H.6zM2.500.3h1.500v2H2.500zM9 .3h1.500v2H9z" fill="#111" /></svg>
              </DateBox>
            </Field>
            <Submit>Lưu thông tin</Submit>
            <BackLink>← Quay lại trang chủ</BackLink>
          </Card>
          <ContentScript>Content Script</ContentScript>
        </PageBody>
        <Scrollbar>
          <svg width="9" height="7" viewBox="0 0 9 7"><path d="M4.500 0 9 6.500H0z" fill="#8b8b8b" /></svg>
          <Thumb />
          <svg width="9" height="7" viewBox="0 0 9 7"><path d="M0 .5h9L4.500 7z" fill="#8b8b8b" /></svg>
        </Scrollbar>
      </Page>

      <Taskbar>
        <TaskbarArt />
        <Start>
          <svg width="24" height="24" viewBox="0 0 24 24"><defs><linearGradient id="w" x1="0" y1="0" x2="1" y2="1"><stop offset="0" stopColor="#7de0ff" /><stop offset="1" stopColor="#0a9bfa" /></linearGradient></defs><path d="M.5.500h11v11H.5zM12.500.500h11v11h-11zM.5 12.500h11v11H.5zM12.500 12.500h11v11h-11z" fill="url(#w)" /></svg>
        </Start>
        <SearchPill>
          <svg width="16" height="16" viewBox="0 0 16 16" fill="none" stroke="#e8eaf8" strokeWidth="1.700"><circle cx="6.500" cy="6.500" r="5.200" /><path d="m10.300 10.300 4.500 4.500" /></svg>
          <span>Search</span>
          <svg width="48" height="26" viewBox="0 0 48 26">
            <path d="M5 3C14 0 34 0 43 3c3 3-2 8-6 10H8C3 10 1 6 5 3z" fill="#35b6ea" />
            <path d="M1 18c4-6 40-9 45-3 4 6-6 10-22 10S-2 23 1 18z" fill="#eedcb0" />
            <path d="M20 8h9v13h-9z" fill="#a8663a" /><path d="m28 6 5-4 6 4v14l-5 3h-6z" fill="#c98b52" /><path d="M32 3v19M35 4v18" stroke="#93582c" />
            <path d="M18 4h10v5H17z" fill="#e6503e" /><path d="M20 4v5M24 4v5M27 4v5" stroke="#fff" strokeWidth="1.200" />
            <path d="m7 22 1-16 2 14 3-9-1 11zM39 18l3-5 3 5z" fill="#5a9a3c" />
          </svg>
        </SearchPill>
        {apps.map(([name, state]) => (
          <AppCell key={name} $active={state === "active"} $dot={state === "dot"}>
            <svg width="24" height="24" viewBox="0 0 24 24" overflow="visible">{appArt[name]}</svg>
          </AppCell>
        ))}
        <Tray>
          <svg width="12" height="8" viewBox="0 0 12 8" fill="none" stroke="#fff" strokeWidth="1.500"><path d="m1 6.500 5-5 5 5" /></svg>
          <Lang>ENG</Lang>
          <TrayIcons>
            <svg width="17" height="13" viewBox="0 0 17 13" fill="none" stroke="#fff" strokeWidth="1.400"><path d="M.8 4.500a11 11 0 0 1 15.400 0M3.200 7a7.500 7.500 0 0 1 10.600 0M5.600 9.300a4.200 4.200 0 0 1 5.800 0" /><circle cx="8.500" cy="11.300" r="1.500" fill="#fff" stroke="none" /></svg>
            <svg width="17" height="14" viewBox="0 0 17 14" fill="none" stroke="#fff" strokeWidth="1.200"><path d="M1 4.800h2.500L7.500 1.200v11.600L3.500 9.200H1zM9.800 4.800a3.200 3.200 0 0 1 0 4.400M11.800 3a5.800 5.800 0 0 1 0 8M13.800 1.200a8.400 8.400 0 0 1 0 11.600" /></svg>
            <svg width="17" height="13" viewBox="0 0 17 13"><rect x="2" y="3" width="12.500" height="8.500" rx="1.500" fill="none" stroke="#fff" strokeWidth="1.300" /><path d="M4 5h8.500v4.500H4zM15 5.500h1.500v3.500H15z" fill="#fff" /><path d="M3.500 0 .5 5h2.200L1.800 8.500 6 3.500H3.500L5 0z" fill="#fff" stroke="#02083c" strokeWidth=".5" /></svg>
          </TrayIcons>
          <Clock>11:12 PM<br />4/23/2025</Clock>
        </Tray>
      </Taskbar>
    </Screen>
  );
}
